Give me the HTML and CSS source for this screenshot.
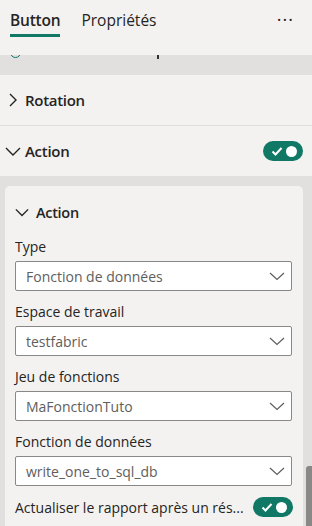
FILE: index.html
```html
<!DOCTYPE html>
<html lang="fr">
<head>
    <meta charset="UTF-8">
    <meta name="viewport" content="width=device-width, initial-scale=1.0">
    <title>Button - Propriétés</title>
    <link rel="stylesheet" href="styles.css">
</head>
<body>
    <div class="pane">
        <div class="tabs">
            <div class="tab active">Button</div>
            <div class="tab">Propriétés</div>
            <div class="more">···</div>
        </div>

        <!-- row scrolled mostly out of view -->
        <div class="clip-row">
            <span class="radio"></span>
            <span class="tick"></span>
        </div>

        <div class="section">
            <svg class="chev" width="16" height="16" viewBox="0 0 16 16"><path d="M5 2 L11 8 L5 14" /></svg>
            <span class="section-title">Rotation</span>
        </div>

        <div class="section open">
            <svg class="chev" width="16" height="16" viewBox="0 0 16 16"><path d="M1 5 L8 12 L15 5" /></svg>
            <span class="section-title">Action</span>
            <div class="toggle">
                <svg width="12" height="12" viewBox="0 0 12 12"><path d="M1.5 6.5 L4.5 9.5 L10.5 3" /></svg>
                <span class="knob"></span>
            </div>
        </div>

        <div class="well">
            <div class="card">
                <div class="card-head">
                    <svg class="chev" width="14" height="14" viewBox="0 0 16 16"><path d="M1 5 L8 12 L15 5" /></svg>
                    <span>Action</span>
                </div>

                <div class="field">
                    <label>Type</label>
                    <div class="dropdown">
                        <span>Fonction de données</span>
                        <svg width="16" height="10" viewBox="0 0 16 10"><path d="M1 2 L8 8.5 L15 2" /></svg>
                    </div>
                </div>

                <div class="field">
                    <label>Espace de travail</label>
                    <div class="dropdown">
                        <span>testfabric</span>
                        <svg width="16" height="10" viewBox="0 0 16 10"><path d="M1 2 L8 8.5 L15 2" /></svg>
                    </div>
                </div>

                <div class="field">
                    <label>Jeu de fonctions</label>
                    <div class="dropdown">
                        <span>MaFonctionTuto</span>
                        <svg width="16" height="10" viewBox="0 0 16 10"><path d="M1 2 L8 8.5 L15 2" /></svg>
                    </div>
                </div>

                <div class="field">
                    <label>Fonction de données</label>
                    <div class="dropdown">
                        <span>write_one_to_sql_db</span>
                        <svg width="16" height="10" viewBox="0 0 16 10"><path d="M1 2 L8 8.5 L15 2" /></svg>
                    </div>
                </div>

                <div class="toggle-row">
                    <span class="toggle-label">Actualiser le rapport après un rés...</span>
                    <div class="toggle">
                        <svg width="12" height="12" viewBox="0 0 12 12"><path d="M1.5 6.5 L4.5 9.5 L10.5 3" /></svg>
                        <span class="knob"></span>
                    </div>
                </div>
            </div>
            <div class="scrollbar"></div>
        </div>
    </div>
</body>
</html>
```

FILE: styles.css
```css
body {
    margin: 0;
    font-family: 'Open Sans', 'Noto Sans', sans-serif;
    background-color: #f3f2f1;
    color: #252423;
}

.pane {
    width: 312px;
    height: 526px;
    overflow: hidden;
    display: flex;
    flex-direction: column;
}

.tabs {
    height: 55px;
    display: flex;
    align-items: flex-start;
    padding: 0 10px;
    box-sizing: border-box;
    flex-shrink: 0;
}

.tab {
    font-size: 15.5px;
    line-height: 22px;
    padding-top: 9px;
    padding-bottom: 3px;
    margin-right: 21px;
    border-bottom: 3px solid transparent;
}

.tab.active {
    font-weight: 600;
    border-bottom-color: #117865;
    letter-spacing: -0.2px;
}

.more {
    margin-left: auto;
    margin-right: 8px;
    font-size: 18px;
    line-height: 22px;
    padding-top: 8px;
    letter-spacing: 1px;
}

.clip-row {
    height: 20px;
    background-color: #e1e0df;
    display: flex;
    align-items: flex-start;
    overflow: hidden;
    flex-shrink: 0;
}

.radio {
    width: 9px;
    height: 9px;
    border: 1.5px solid #117865;
    border-radius: 50%;
    margin-left: 10px;
    margin-top: -8px;
}

.tick {
    width: 1.5px;
    height: 4px;
    background-color: #323130;
    margin-left: 136px;
}

.section {
    height: 50px;
    display: flex;
    align-items: center;
    padding: 0 9px 0 5px;
    border-bottom: 1px solid #e1dfdd;
    flex-shrink: 0;
}

.section.open {
    border-bottom: none;
}

.chev {
    fill: none;
    stroke: #252423;
    stroke-width: 1.4;
    margin-right: 4px;
}

.section .chev {
    width: 16px;
    margin-right: 4px;
}

.section-title {
    font-size: 15px;
    font-weight: 600;
    letter-spacing: -0.3px;
}

.toggle {
    margin-left: auto;
    width: 40px;
    height: 20px;
    border-radius: 10px;
    background-color: #117865;
    display: flex;
    align-items: center;
    padding: 0 4px 0 8px;
    box-sizing: border-box;
    flex-shrink: 0;
}

.toggle svg {
    fill: none;
    stroke: #fff;
    stroke-width: 2;
}

.toggle .knob {
    margin-left: auto;
    width: 11px;
    height: 11px;
    border-radius: 50%;
    background-color: #fff;
    margin-right: 2px;
}

.well {
    flex: 1;
    background-color: #e1e0df;
    padding: 10px 9px 0 5px;
    position: relative;
}

.card {
    background-color: #f3f2f1;
    border-radius: 5px 5px 0 0;
    height: 100%;
    padding: 0 11px 0 10px;
    box-sizing: border-box;
}

.card-head {
    display: flex;
    align-items: center;
    height: 24px;
    padding-top: 14px;
    margin-bottom: 13px;
    font-size: 14.5px;
    font-weight: 600;
    letter-spacing: -0.3px;
}

.card-head .chev {
    margin-right: 7px;
    stroke-width: 1.6;
}

.field {
    margin-bottom: 11px;
}

label {
    display: block;
    font-size: 14px;
    line-height: 20px;
    margin-bottom: 4px;
}

.dropdown {
    height: 30px;
    box-sizing: border-box;
    border: 1px solid #8a8886;
    border-radius: 2px;
    background-color: #fff;
    display: flex;
    align-items: center;
    padding: 0 6px 0 10px;
    font-size: 14px;
    color: #605e5c;
}

.dropdown svg {
    margin-left: auto;
    fill: none;
    stroke: #605e5c;
    stroke-width: 1.2;
}

.toggle-row {
    display: flex;
    align-items: center;
    height: 20px;
}

.toggle-label {
    font-size: 14px;
    white-space: nowrap;
}

.toggle-row .toggle {
    margin-right: -1px;
}

.scrollbar {
    position: absolute;
    right: 0;
    top: 290px;
    width: 6px;
    height: 80px;
    background-color: #8a8886;
    border-radius: 3px 0 0 0;
}
```
